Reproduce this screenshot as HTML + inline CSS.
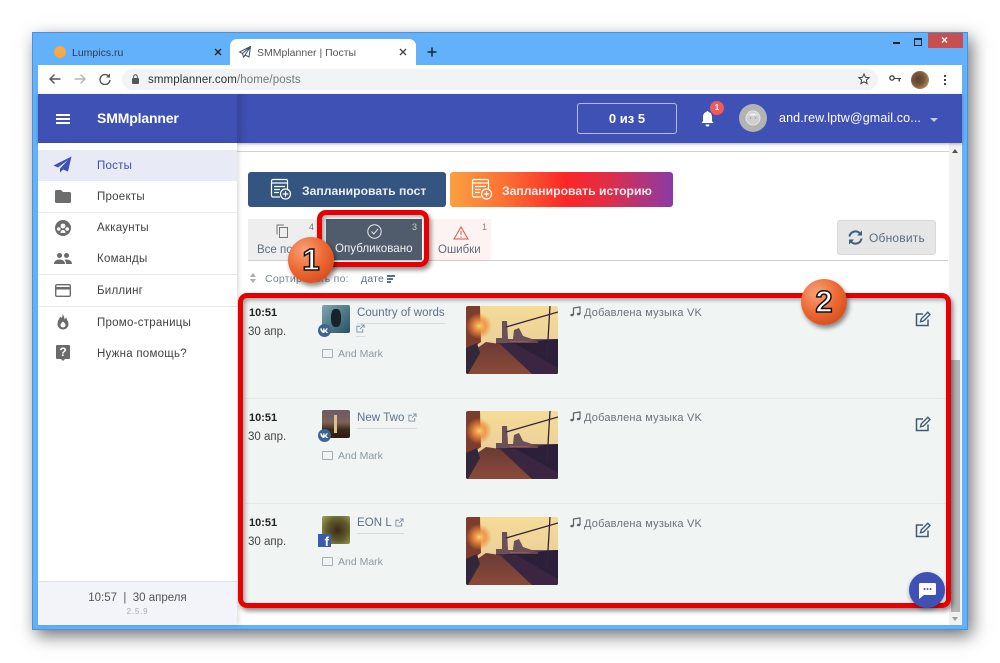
<!DOCTYPE html>
<html><head><meta charset="utf-8"><style>
html,body{margin:0;padding:0;background:#fff}
body{width:1000px;height:663px;position:relative;overflow:hidden;font-family:"Liberation Sans",sans-serif;color:#444}
.a{position:absolute}
.t{position:absolute;white-space:nowrap;line-height:16px}
.side{font-size:11.5px;left:97px;color:#424242;letter-spacing:.25px}
.hr{position:absolute;left:38px;width:199px;height:1px;background:#e8e8e8}
.sep{position:absolute;left:245px;width:703px;height:1px;background:#e4e9e8}
.tm{left:249px;font-size:11px;font-weight:bold;color:#222}
.dt{left:248px;font-size:11.5px;color:#444}
.lk{font-size:11.5px;color:#5d7288;border-bottom:1px solid #d5dce0;line-height:15px;padding-bottom:2px;letter-spacing:.05px}
.mk{left:338px;font-size:10.5px;color:#8d9aa3}
.cb{position:absolute;left:322px;width:9px;height:7px;border:1px solid #a4afb5;border-radius:1px}
.ms{left:584px;font-size:11px;color:#6b7378;letter-spacing:.2px}
.num{position:absolute;width:46px;height:46px;border-radius:50%;background:radial-gradient(circle at 35% 30%,#f9a27a 0,#ee6a33 45%,#c63d14 100%);box-shadow:2px 3px 5px rgba(0,0,0,.45);text-align:center;font:bold 31px/46px "Liberation Sans",sans-serif;color:#fff;-webkit-text-stroke:1.5px #111}
.red{position:absolute;border:5px solid #e60000;box-sizing:border-box;box-shadow:2px 3px 5px rgba(0,0,0,.45),inset 2px 2px 4px rgba(0,0,0,.35)}
</style></head><body>
<svg width="0" height="0" style="position:absolute"><defs>
<linearGradient id="sky" x1="0" y1="0" x2="0" y2="1"><stop offset="0" stop-color="#f5dc96"/><stop offset=".5" stop-color="#ecd29a"/><stop offset="1" stop-color="#c59a70"/></linearGradient>
<linearGradient id="road" x1="0" y1="0" x2="0" y2="1"><stop offset="0" stop-color="#6b3a35"/><stop offset="1" stop-color="#8a4a3a"/></linearGradient>
<radialGradient id="sun" cx=".5" cy=".5" r=".5"><stop offset="0" stop-color="#ffd070"/><stop offset=".5" stop-color="#ee8838" stop-opacity=".8"/><stop offset="1" stop-color="#ee8838" stop-opacity="0"/></radialGradient>
<symbol id="photo" viewBox="0 0 92 68">
<rect width="92" height="68" fill="url(#sky)"/>
<path d="M30 32h6V15h5l1 18h5l1-9 5-2 4 8 9 3h26v35H30z" fill="#6b5058"/>
<path d="M28 38 92 33V68H62z" fill="#2c1f3a"/>
<path d="M30 37 62 68H92V62L50 38z" fill="#3a2640"/>
<path d="M20 36 34 38 66 68H0V50z" fill="url(#road)"/>
<path d="M0 0h14l1 36-6 4-9 6z" fill="#7d3d2e"/>
<path d="M0 42 11 37 14 47 2 68H0z" fill="#33283a"/>
<circle cx="13" cy="20" r="13" fill="url(#sun)"/>
<path d="M84 0 81 50M40 21 92 6" stroke="#33233a" stroke-width="1.300" fill="none"/>
<path d="M44 36h28" stroke="#b06a66" stroke-width="1"/>
</symbol>
<symbol id="plan" viewBox="0 0 22 22">
<path d="M3 1.500h13a1.500 1.500 0 0 1 1.500 1.500v8M10 19H3a1.500 1.500 0 0 1-1.500-1.500V3A1.500 1.500 0 0 1 3 1.500M1.500 5h16M4 8.500h11M4 11.500h6M4 14.500h5" fill="none" stroke="currentColor" stroke-width="1.200"/>
<circle cx="15.500" cy="16" r="5" fill="none" stroke="currentColor" stroke-width="1.200"/>
<path d="M15.500 13.200v5.600M12.700 16h5.600" stroke="currentColor" stroke-width="1.200"/>
</symbol>
<symbol id="ext" viewBox="0 0 10 10"><path d="M7.500 5.500V9H1V2.500h3.500M5.500 1H9v3.500M9 1 4.500 5.500" fill="none" stroke="#7c90a3" stroke-width="1"/></symbol>
<symbol id="edit" viewBox="0 0 16 16"><path d="M13 8.500V14.500H1.500V3H8" fill="none" stroke="#3f5a75" stroke-width="1.500"/><path d="M5.500 10.800 6.300 7.800 12.800 1.300 15 3.500 8.500 10z" fill="none" stroke="#3f5a75" stroke-width="1.400"/></symbol>
<symbol id="note" viewBox="0 0 11 11"><path d="M3.500 9V2L10 1v7" fill="none" stroke="#5d6468" stroke-width="1.200"/><ellipse cx="2" cy="9" rx="1.700" ry="1.300" fill="#5d6468"/><ellipse cx="8.500" cy="8" rx="1.700" ry="1.300" fill="#5d6468"/></symbol>
<symbol id="vk" viewBox="0 0 12 12"><circle cx="6" cy="6" r="6" fill="#3f6292"/><path d="M2 4h1.400c.3 1.200.9 2.200 1.400 2.400V4h1.200v1.800C6.600 5.700 7.200 4.900 7.600 4H9c-.3 1-1 1.800-1.500 2.300.6.400 1.300 1.100 1.700 2H7.700C7.400 7.500 6.700 7 6 6.900v1.400H5.400C3.600 8.300 2.400 6.400 2 4z" fill="#fff"/></symbol>
</defs></svg>

<!-- window -->
<div class="a" style="left:32px;top:32px;width:936px;height:598px;background:#63b0fb;border:1px solid #4b93d6;box-sizing:border-box;box-shadow:4px 6px 16px rgba(0,0,0,.55)"></div>
<!-- win controls -->
<div class="a" style="left:893px;top:42px;width:7px;height:2px;background:#222"></div>
<div class="a" style="left:914px;top:38px;width:6px;height:5px;border:1px solid #1c2a3a;border-top-width:2px"></div>
<div class="a" style="left:928px;top:33px;width:35px;height:15px;background:#c84f4f"></div>
<div class="t" style="left:941px;top:33px;font-size:12px;color:#fff;line-height:15px;font-weight:bold">×</div>
<!-- tabs -->
<div class="a" style="left:54px;top:46px;width:12px;height:12px;border-radius:50%;background:#f6a948"></div>
<div class="t" style="left:72px;top:45px;font-size:10.500px;color:#2d3d50">Lumpics.ru</div>
<svg class="a" style="left:214px;top:48px" width="8" height="8"><path d="M1 1l6 6M7 1l-6 6" stroke="#222" stroke-width="1.400"/></svg>
<div class="a" style="left:230px;top:39px;width:186px;height:27px;background:#fff;border-radius:7px 7px 0 0"></div>
<svg class="a" style="left:239px;top:46px" width="12" height="12" viewBox="0 0 12 12"><path d="M11.500 .5 .5 6l3 1.500L11.500 .5 6 9l4 2zM3.500 7.500 4.500 11l2-2" fill="none" stroke="#3d4f66" stroke-width="1"/></svg>
<div class="t" style="left:257px;top:45px;font-size:10.500px;color:#555">SMMplanner | Посты</div>
<svg class="a" style="left:399px;top:48px" width="8" height="8"><path d="M1 1l6 6M7 1l-6 6" stroke="#444" stroke-width="1.400"/></svg>
<svg class="a" style="left:427px;top:47px" width="10" height="10"><path d="M5 .5v9M.5 5h9" stroke="#1c2733" stroke-width="1.500"/></svg>
<!-- toolbar -->
<div class="a" style="left:38px;top:65px;width:924px;height:29px;background:#fff"></div>
<div class="a" style="left:122px;top:69px;width:756px;height:21px;background:#f1f3f4;border-radius:11px"></div>
<svg class="a" style="left:49px;top:73px" width="12" height="12" viewBox="0 0 12 12"><path d="M11.500 6H1M5.500 1.500 1 6l4.500 4.500" fill="none" stroke="#555" stroke-width="1.400"/></svg>
<svg class="a" style="left:74px;top:73px" width="12" height="12" viewBox="0 0 12 12"><path d="M.5 6H11M6.500 1.500 11 6l-4.500 4.500" fill="none" stroke="#b5b5b5" stroke-width="1.400"/></svg>
<svg class="a" style="left:99px;top:73px" width="12" height="12" viewBox="0 0 12 12"><path d="M10 3.500A5 5 0 1 0 11 7" fill="none" stroke="#555" stroke-width="1.400"/><path d="M11 .5v4H7z" fill="#555"/></svg>
<svg class="a" style="left:132px;top:74px" width="8" height="10" viewBox="0 0 8 10"><rect y="4" width="7" height="6" rx="1" fill="#555"/><path d="M1.700 4.500V2.500a1.800 1.800 0 0 1 3.600 0v2" fill="none" stroke="#555"/></svg>
<div class="t" style="left:148px;top:72px;font-size:11.500px;color:#333;letter-spacing:.1px">smmplanner.com<span style="color:#777">/home/posts</span></div>
<svg class="a" style="left:858px;top:73px" width="12" height="12" viewBox="0 0 12 12"><path d="M6 1l1.500 3.300 3.500.4-2.600 2.400.7 3.500L6 8.800 2.900 10.600l.7-3.500L1 4.700l3.500-.4z" fill="none" stroke="#444" stroke-width="1"/></svg>
<svg class="a" style="left:889px;top:75px" width="12" height="8" viewBox="0 0 12 8"><circle cx="3" cy="3" r="2.200" fill="none" stroke="#444" stroke-width="1.300"/><path d="M5 3h7v1h-1v2.500H9.500V4H5z" fill="#444"/></svg>
<div class="a" style="left:911px;top:71px;width:18px;height:18px;border-radius:50%;background:radial-gradient(circle at 40% 45%,#5a3c2a 0,#7a5a3a 45%,#e2bd80 100%)"></div>
<div class="a" style="left:944px;top:75px;width:2px;height:2px;background:#444;box-shadow:0 4px #444,0 8px #444"></div>
<!-- page white -->
<div class="a" style="left:38px;top:94px;width:924px;height:531px;background:#fff"></div>
<!-- scrollbar -->
<div class="a" style="left:949px;top:143px;width:13px;height:482px;background:#f1f1f1"></div>
<div class="a" style="left:951px;top:360px;width:9px;height:252px;background:#b4b4b4"></div>
<div class="a" style="left:952px;top:149px;border:3.500px solid transparent;border-bottom:4px solid #555;border-top:0"></div>
<div class="a" style="left:952px;top:617px;border:3.500px solid transparent;border-top:4px solid #9a9a9a;border-bottom:0"></div>
<div class="a" style="left:237px;top:151px;width:712px;height:1px;background:#d2d2d2"></div>
<!-- header -->
<div class="a" style="left:38px;top:94px;width:924px;height:49px;background:#3f51b5;box-shadow:0 1px 3px rgba(0,0,0,.3)"></div>
<div class="a" style="left:237px;top:94px;width:12px;height:49px;background:linear-gradient(90deg,rgba(0,0,0,.14),rgba(0,0,0,0))"></div>
<div class="a" style="left:56px;top:114px;width:14px;height:1.500px;background:#fff;box-shadow:0 4px #fff,0 8px #fff"></div>
<div class="t" style="left:97px;top:110px;font-size:14px;font-weight:bold;color:#fff;letter-spacing:-.15px">SMMplanner</div>
<div class="a" style="left:577px;top:103px;width:100px;height:31px;box-sizing:border-box;border:1px solid #b3bde8;border-radius:3px;text-align:center;color:#fff;font-size:13px;font-weight:bold;line-height:29px">0 из 5</div>
<svg class="a" style="left:700px;top:110px" width="15" height="17" viewBox="0 0 15 17"><path d="M7.500 1a1 1 0 0 1 1 1c2.500.6 3.500 2.500 3.500 5v4l1.500 2H1.500L3 11V7c0-2.500 1-4.400 3.500-5a1 1 0 0 1 1-1z" fill="#fff"/><path d="M5.500 14.500a2 2 0 0 0 4 0z" fill="#fff"/></svg>
<div class="a" style="left:710px;top:101px;width:14px;height:14px;border-radius:50%;background:#f05a5a;color:#fff;font-size:8px;font-weight:bold;text-align:center;line-height:14px">1</div>
<div class="a" style="left:739px;top:104px;width:28px;height:28px;border-radius:50%;background:#b3b3b3"></div>
<svg class="a" style="left:745px;top:110px" width="16" height="16" viewBox="0 0 16 16"><circle cx="8" cy="8" r="7" fill="#cfcfcf" stroke="#e6e6e6"/><path d="M2 6c2-3 9-4 12 0l-2-1-4 1-4-1z" fill="#eee"/><circle cx="5.500" cy="8" r=".8" fill="#999"/><circle cx="10.500" cy="8" r=".8" fill="#999"/></svg>
<div class="t" style="left:779px;top:110px;font-size:12.500px;color:#fff;letter-spacing:.12px">and.rew.lptw@gmail.co...</div>
<div class="a" style="left:930px;top:118px;border:4px solid transparent;border-top:4px solid #c3c9e8;border-bottom:0"></div>
<!-- sidebar -->
<div class="a" style="left:38px;top:143px;width:199px;height:482px;background:#fff;box-shadow:2px 0 4px rgba(0,0,0,.13)"></div>
<div class="a" style="left:38px;top:150px;width:199px;height:31px;background:#e8eaf6"></div>
<div class="hr" style="top:212px"></div><div class="hr" style="top:274px"></div><div class="hr" style="top:306px"></div>
<svg class="a" style="left:53px;top:156px" width="19" height="17" viewBox="0 0 19 17"><path d="M18.500 .5 .5 9.500 5 11.500 15 4 7 12.500V16.500L10 13.500 15 15.500z" fill="#3f51b5"/></svg>
<div class="t side" style="top:158px;color:#3f51b5">Посты</div>
<svg class="a" style="left:55px;top:190px" width="16" height="13" viewBox="0 0 16 13"><path d="M0 1.500A1.500 1.500 0 0 1 1.500 0H6l2 2h6.500A1.500 1.500 0 0 1 16 3.500v8a1.500 1.500 0 0 1-1.500 1.500h-13A1.500 1.500 0 0 1 0 11.500z" fill="#6d6d6d"/></svg>
<div class="t side" style="top:189px">Проекты</div>
<svg class="a" style="left:55px;top:220px" width="16" height="16" viewBox="0 0 16 16"><circle cx="8" cy="8" r="8" fill="#6b6b6b"/><circle cx="8" cy="6" r="2.400" fill="#fff"/><circle cx="3.800" cy="9" r="1.800" fill="#fff"/><circle cx="12.200" cy="9" r="1.800" fill="#fff"/><path d="M5.500 13c0-2 1-3 2.500-3s2.500 1 2.500 3z" fill="#fff"/></svg>
<div class="t side" style="top:220px">Аккаунты</div>
<svg class="a" style="left:54px;top:253px" width="18" height="11" viewBox="0 0 18 11"><circle cx="5.500" cy="2.500" r="2.500" fill="#6b6b6b"/><circle cx="12.500" cy="2.500" r="2.500" fill="#6b6b6b"/><path d="M0 11c0-3 2.500-4.500 5.500-4.500S11 8 11 11zM12 11c0-2-.5-3.300-1.500-4.300 3.500-.8 7.500.7 7.500 4.300z" fill="#6b6b6b"/></svg>
<div class="t side" style="top:251px">Команды</div>
<svg class="a" style="left:55px;top:284px" width="16" height="13" viewBox="0 0 16 13"><rect x=".7" y=".7" width="14.600" height="11.600" rx="1.200" fill="none" stroke="#6b6b6b" stroke-width="1.400"/><rect x="1" y="3" width="14" height="2.500" fill="#6b6b6b"/></svg>
<div class="t side" style="top:283px">Биллинг</div>
<svg class="a" style="left:57px;top:314px" width="12" height="16" viewBox="0 0 12 16"><path d="M5 0c1 2 .3 3-.5 4-.5-.7-.8-1-1.500-1.500C3.200 4 .5 6 .5 10a5.500 5.500 0 0 0 11 0c0-3-2-4-2.200-6.500C8.500 4 8 5 7.500 5.500 7.500 3 6.500 1 5 0zM6 7.500c1 1 2.500 2 2.500 3.500a2.500 2.500 0 0 1-5 0c0-1.500 1.500-2.500 2.500-3.500z" fill="#6b6b6b" fill-rule="evenodd"/></svg>
<div class="t side" style="top:315px">Промо-страницы</div>
<div class="a" style="left:56px;top:345px;width:14px;height:14px;background:#6b6b6b;border-radius:1px;color:#fff;font-size:12px;font-weight:bold;text-align:center;line-height:14px">?</div>
<div class="a" style="left:61px;top:359px;border:2px solid transparent;border-top:2px solid #6b6b6b;border-bottom:0"></div>
<div class="t side" style="top:346px">Нужна помощь?</div>
<div class="a" style="left:38px;top:581px;width:199px;height:44px;background:#f3f4f9;border-top:1px solid #e2e2e8;box-sizing:border-box"></div>
<div class="t" style="left:38px;width:199px;text-align:center;top:590px;font-size:11.500px;color:#555">10:57 &nbsp;|&nbsp; 30 апреля</div>
<div class="t" style="left:38px;width:199px;text-align:center;top:604px;font-size:8px;color:#aaa;letter-spacing:.8px">2.5.9</div>
<!-- buttons -->
<div class="a" style="left:248px;top:172px;width:198px;height:35px;background:#33557f;border-radius:3px"></div>
<svg class="a" style="left:270px;top:178px;color:#fff" width="22" height="22"><use href="#plan"/></svg>
<div class="t" style="left:302px;top:183px;font-size:12.200px;font-weight:bold;color:#e9edf2">Запланировать пост</div>
<div class="a" style="left:450px;top:172px;width:223px;height:35px;border-radius:3px;background:linear-gradient(90deg,#fba13f 0,#fb6f33 25%,#fb2727 52%,#e22d45 70%,#8a3ba6 100%)"></div>
<svg class="a" style="left:471px;top:178px;color:#fff" width="22" height="22"><use href="#plan"/></svg>
<div class="t" style="left:502px;top:183px;font-size:12.200px;font-weight:bold;color:#f6ecec">Запланировать историю</div>
<!-- refresh -->
<div class="a" style="left:837px;top:220px;width:99px;height:35px;background:#e6e6e6;border:1px solid #d9d9d9;box-sizing:border-box;border-radius:3px"></div>
<svg class="a" style="left:848px;top:230px" width="15" height="15" viewBox="0 0 15 15"><path d="M1.500 6.500A6 6 0 0 1 12 3.500M13.500 8.500A6 6 0 0 1 3 11.500" fill="none" stroke="#3d5f82" stroke-width="2"/><path d="M14 .5v5H9zM1 14.500v-5h5z" fill="#3d5f82"/></svg>
<div class="t" style="left:869px;top:230px;font-size:12px;color:#5d6d7e;letter-spacing:.2px">Обновить</div>
<!-- tabs row -->
<div class="a" style="left:248px;top:219px;width:78px;height:41px;background:#eee"></div>
<div class="a" style="left:422px;top:219px;width:69px;height:41px;background:#fdf3f3"></div>
<div class="a" style="left:248px;top:260px;width:700px;height:1px;background:#cfcfcf"></div>
<svg class="a" style="left:276px;top:224px" width="13" height="14" viewBox="0 0 13 14"><rect x="3.500" y="3.500" width="8" height="10" fill="none" stroke="#777"/><path d="M1 10.500V1h7" fill="none" stroke="#777"/></svg>
<div class="t" style="left:257px;top:242px;font-size:11.500px;color:#5f6d7c">Все посты</div>
<div class="t" style="left:309px;top:219px;font-size:9px;color:#777">4</div>
<div class="a" style="left:326px;top:219px;width:96px;height:41px;background:#505c6b"></div>
<svg class="a" style="left:367px;top:224px" width="15" height="15" viewBox="0 0 15 15"><circle cx="7.500" cy="7.500" r="6.700" fill="none" stroke="#e8e8e8"/><path d="M4.500 7.500 6.800 10 11 5" fill="none" stroke="#e8e8e8"/></svg>
<div class="t" style="left:335px;top:241px;font-size:11.600px;color:#f1f1f1">Опубликовано</div>
<div class="t" style="left:412px;top:219px;font-size:9px;color:#ccc">3</div>
<svg class="a" style="left:453px;top:226px" width="16" height="14" viewBox="0 0 16 14"><path d="M8 1 15 13H1z" fill="none" stroke="#d9534f"/><path d="M8 5v4M8 10.500v1.200" stroke="#d9534f"/></svg>
<div class="t" style="left:438px;top:242px;font-size:11.500px;color:#5f6d7c">Ошибки</div>
<div class="t" style="left:482px;top:219px;font-size:9px;color:#888">1</div>
<!-- sort -->
<div class="a" style="left:250px;top:273px;border:3px solid transparent;border-bottom:4px solid #aaa;border-top:0"></div>
<div class="a" style="left:250px;top:279px;border:3px solid transparent;border-top:4px solid #aaa;border-bottom:0"></div>
<div class="t" style="left:265px;top:271px;font-size:10.500px;color:#7a8790;letter-spacing:.25px">Сортировать по:</div>
<div class="t" style="left:361px;top:271px;font-size:10.500px;color:#5f6d7c;letter-spacing:.2px">дате</div>
<div class="a" style="left:387px;top:275px;width:8px;height:1.500px;background:#5f6d7c"></div>
<div class="a" style="left:387px;top:278px;width:6px;height:1.500px;background:#5f6d7c"></div>
<div class="a" style="left:387px;top:281px;width:4px;height:1.500px;background:#5f6d7c"></div>
<!-- list -->
<div class="a" style="left:240px;top:296px;width:708px;height:308px;background:#f0f4f3"></div>
<div class="sep" style="top:398px"></div><div class="sep" style="top:503px"></div>
<!-- row1 -->
<div class="t tm" style="top:305px">10:51</div><div class="t dt" style="top:324px">30 апр.</div>
<div class="a" style="left:322px;top:305px;width:28px;height:28px;border-radius:2px;background:linear-gradient(135deg,#7fa5b0,#26525f)"></div>
<div class="a" style="left:331px;top:309px;width:10px;height:18px;background:#16242a;border-radius:40%"></div>
<svg class="a" style="left:318px;top:324px" width="13" height="13"><use href="#vk"/></svg>
<div class="t lk" style="left:357px;top:306px">Country of words</div>
<svg class="a" style="left:356px;top:324px" width="9" height="9"><use href="#ext"/></svg>
<div class="a" style="left:356px;top:336px;width:9px;height:1px;background:#d5dce0"></div>
<div class="cb" style="top:349px"></div><div class="t mk" style="top:346px">And Mark</div>
<svg class="a" style="left:466px;top:306px;border-radius:2px" width="92" height="68"><use href="#photo"/></svg>
<svg class="a" style="left:570px;top:306px" width="11" height="11"><use href="#note"/></svg>
<div class="t ms" style="top:305px">Добавлена музыка VK</div>
<svg class="a" style="left:915px;top:311px" width="16" height="16"><use href="#edit"/></svg>
<!-- row2 -->
<div class="t tm" style="top:410px">10:51</div><div class="t dt" style="top:429px">30 апр.</div>
<div class="a" style="left:322px;top:410px;width:28px;height:28px;border-radius:2px;background:linear-gradient(180deg,#6b5a68 0,#7b6255 45%,#3a2a1c 70%,#2a1d14 100%)"></div>
<div class="a" style="left:334px;top:415px;width:3px;height:18px;background:#d8c090"></div>
<svg class="a" style="left:318px;top:429px" width="13" height="13"><use href="#vk"/></svg>
<div class="t lk" style="left:357px;top:411px">New Two <svg width="9" height="9" style="vertical-align:-1px"><use href="#ext"/></svg></div>
<div class="cb" style="top:451px"></div><div class="t mk" style="top:448px">And Mark</div>
<svg class="a" style="left:466px;top:411px;border-radius:2px" width="92" height="68"><use href="#photo"/></svg>
<svg class="a" style="left:570px;top:411px" width="11" height="11"><use href="#note"/></svg>
<div class="t ms" style="top:410px">Добавлена музыка VK</div>
<svg class="a" style="left:915px;top:416px" width="16" height="16"><use href="#edit"/></svg>
<!-- row3 -->
<div class="t tm" style="top:515px">10:51</div><div class="t dt" style="top:534px">30 апр.</div>
<div class="a" style="left:322px;top:516px;width:28px;height:28px;border-radius:2px;background:radial-gradient(circle at 55% 50%,#3d2a1a 0,#5f5a2a 50%,#a3a85c 100%)"></div>
<div class="a" style="left:318px;top:534px;width:13px;height:13px;background:#3b5bab;color:#fff;font-size:13px;font-weight:bold;line-height:15px;text-align:right;overflow:hidden;box-sizing:border-box;padding-right:2px">f</div>
<div class="t lk" style="left:357px;top:516px">EON L <svg width="9" height="9" style="vertical-align:-1px"><use href="#ext"/></svg></div>
<div class="cb" style="top:557px"></div><div class="t mk" style="top:554px">And Mark</div>
<svg class="a" style="left:466px;top:517px;border-radius:2px" width="92" height="68"><use href="#photo"/></svg>
<svg class="a" style="left:570px;top:517px" width="11" height="11"><use href="#note"/></svg>
<div class="t ms" style="top:516px">Добавлена музыка VK</div>
<svg class="a" style="left:915px;top:522px" width="16" height="16"><use href="#edit"/></svg>
<!-- annotations -->
<div class="red" style="left:238px;top:293px;width:713px;height:315px;border-radius:9px"></div>
<div class="red" style="left:317px;top:210px;width:112px;height:57px;border-radius:9px"></div>
<div class="a" style="left:909px;top:572px;width:36px;height:36px;border-radius:50%;background:#3f51b5;box-shadow:0 2px 4px rgba(0,0,0,.3)"></div>
<svg class="a" style="left:919px;top:583px" width="17" height="16" viewBox="0 0 17 16"><path d="M1.500 0h14A1.500 1.500 0 0 1 17 1.500v9a1.500 1.500 0 0 1-1.500 1.500H5l-5 4V1.500A1.500 1.500 0 0 1 1.500 0z" fill="#fff"/><circle cx="5.500" cy="6" r="1" fill="#3f51b5"/><circle cx="8.500" cy="6" r="1" fill="#3f51b5"/><circle cx="11.500" cy="6" r="1" fill="#3f51b5"/></svg>
<div class="num" style="left:288px;top:237px">1</div>
<div class="num" style="left:801px;top:279px">2</div>
</body></html>
